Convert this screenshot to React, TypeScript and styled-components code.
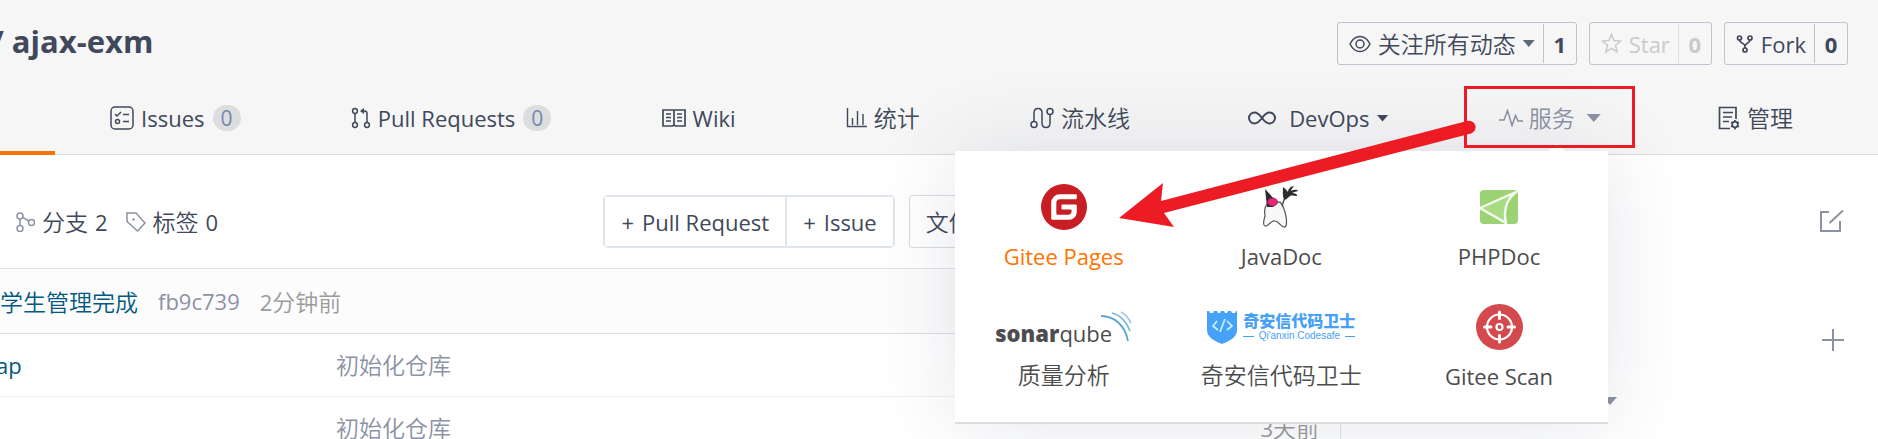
import React from 'react';
import styled, { createGlobalStyle } from 'styled-components';
import { SiGitee } from 'react-icons/si';

const ink = '#40485b';
const muted = '#8c92a4';
const link = '#005980';
const red = '#ed1c24';

const GlobalStyle = createGlobalStyle`
  *, *::before, *::after { box-sizing: border-box; }
  body {
    margin: 0;
    background: #fff;
    color: ${ink};
    font-family: 'Open Sans', 'Noto Sans CJK SC', sans-serif;
    font-size: 22px;
    line-height: 28px;
  }
  a { color: inherit; text-decoration: none; }
  button { font: inherit; color: inherit; cursor: pointer; }
`;

const Page = styled.div`
  height: 100vh;
  overflow: hidden;
`;

const Cjk = styled.span`
  padding-bottom: 2px;
  font-family: 'Noto Sans CJK SC', sans-serif;
  font-size: 23px;
  font-weight: 350;
`;

/* ---------- header ---------- */

const Header = styled.header`
  background: #f6f6f6;
  border-bottom: 1px solid #ddd;
`;

const TitleRow = styled.div`
  display: flex;
  align-items: flex-start;
  justify-content: space-between;
  padding: 22px 30px 19px 0;
`;

const Title = styled.h1`
  margin: 0 0 0 -9px;
  font-size: 31px;
  line-height: 38px;
  font-weight: 700;
`;

const Actions = styled.div`
  display: flex;
  gap: 12px;
`;

const CountButton = styled.div<{ $disabled?: boolean }>`
  display: flex;
  height: 43px;
  padding: 1px 0;
  border: 1px solid #bfc3d0;
  border-radius: 3px;
  color: ${(p) => (p.$disabled ? '#c9caca' : ink)};
`;

const CountMain = styled.button`
  display: flex;
  align-items: center;
  gap: 7px;
  padding: 0 8px 0 11px;
  border: 0;
  background: none;
  white-space: nowrap;
`;

const Count = styled.a<{ $disabled?: boolean }>`
  width: 33px;
  border-left: 1px solid ${(p) => (p.$disabled ? '#dfe0e5' : '#bfc3d0')};
  font-weight: 700;
  line-height: 41px;
  text-align: center;
`;

const Caret = styled.span<{ $w?: number; $color?: string }>`
  flex: none;
  width: ${(p) => p.$w ?? 12}px;
  height: ${(p) => ((p.$w ?? 12) > 12 ? 8 : 7)}px;
  background: ${(p) => p.$color ?? ink};
  clip-path: polygon(0 0, 100% 0, 50% 100%);
`;

const Nav = styled.nav`
  display: flex;
  height: 70px;
  padding-right: 30px;
`;

const ActiveTab = styled.span`
  flex: none;
  width: 55px;
  margin-bottom: -1px;
  border-bottom: 4px solid #fe7300;
`;

const NavItem = styled.div`
  position: relative;
  flex: 1 1 auto;
  display: flex;
  justify-content: center;
`;

const NavLink = styled.a<{ $muted?: boolean; $lead?: boolean; $gap?: number; $caretGap?: number }>`
  display: flex;
  align-items: center;
  gap: ${(p) => p.$gap ?? 7}px;
  padding: 0 0 2px ${(p) => (p.$lead ? 7 : 0)}px;
  color: ${(p) => (p.$muted ? muted : ink)};
  white-space: nowrap;

  ${Caret} { margin-left: ${(p) => (p.$caretGap ?? 0) - (p.$gap ?? 7)}px; }
`;

const Badge = styled.span`
  width: 28px;
  height: 26px;
  margin-left: 1px;
  border-radius: 13px;
  background: #dcddde;
  color: #7588b0;
  font-size: 21px;
  line-height: 26px;
  text-align: center;
`;

/* ---------- services menu ---------- */

const Menu = styled.div`
  position: absolute;
  z-index: 2;
  top: 67px;
  right: 48px;
  width: 653px;
  padding: 33px 0 24px;
  background: #fff;
  border-bottom: 2px solid #dcdddd;
  box-shadow: 0 0 80px rgba(40, 50, 90, 0.12);

  &::before {
    content: '';
    position: absolute;
    right: 43px;
    bottom: 100%;
    border: 8px solid transparent;
    border-top-width: 0;
    border-bottom-color: #fff;
  }
`;

const MenuGrid = styled.div`
  display: grid;
  grid-template-columns: repeat(3, 1fr);
  row-gap: 26px;
`;

const MenuItem = styled.a<{ $active?: boolean }>`
  display: flex;
  flex-direction: column;
  align-items: center;
  gap: 10px;
  height: 94px;
  color: ${(p) => (p.$active ? '#fe7300' : '#4c4c4c')};
  line-height: 32px;
  white-space: nowrap;

  ${Cjk} { line-height: 28px; }
`;

const LogoSlot = styled.span`
  display: flex;
  align-items: center;
  justify-content: center;
  height: 46px;
`;

const SonarMark = styled.span`
  display: flex;
  align-items: center;
  margin-top: 12px;
  color: #4d4d4f;
  font-size: 22px;
  line-height: 30px;
  font-weight: 400;

  b { font-weight: 800; }
  svg { margin: -12px 0 0 -12px; }
`;

const CodesafeMark = styled.span`
  display: flex;
  align-items: center;
  gap: 6px;
  color: #46a0f7;
`;

const CodesafeName = styled.span`
  display: flex;
  flex-direction: column;
  font: 900 16px/18px 'Noto Sans CJK SC', sans-serif;
`;

const CodesafeSub = styled.span`
  display: flex;
  align-items: center;
  gap: 5px;
  font: 400 10px/14px 'Liberation Sans', sans-serif;

  &::before, &::after {
    content: '';
    flex: 1;
    height: 1px;
    background: currentColor;
  }
`;

const Highlight = styled.span`
  position: absolute;
  z-index: 3;
  top: 2px;
  right: 21px;
  width: 171px;
  height: 62px;
  border: 3px solid ${red};
  pointer-events: none;
`;

const Arrow = styled.svg`
  position: absolute;
  z-index: 3;
  top: 34px;
  right: 179px;
  pointer-events: none;
`;

/* ---------- body ---------- */

const Body = styled.main`
  display: grid;
  grid-template-columns: minmax(0, 1fr) 537px;
`;

const Toolbar = styled.div`
  display: flex;
  height: 113px;
  padding-top: 40px;
`;

const Refs = styled.div`
  flex: 0 0 45%;
  display: flex;
  align-items: center;
  gap: 18px;
  height: 54px;
  padding-left: 16px;
`;

const RefLink = styled.a`
  display: flex;
  align-items: center;
  gap: 7px;
`;

const ButtonGroup = styled.div`
  display: flex;
  height: 53px;
  margin-right: 14px;
  border: 2px solid #dfe5eb;
  border-radius: 5px;
`;

const GroupButton = styled.button`
  padding: 0 16px;
  border: 0;
  background: #fff;
  white-space: nowrap;

  & + & { border-left: 2px solid #dfe5eb; }
  span { margin-right: 8px; }
`;

const FileButton = styled.button`
  display: flex;
  align-items: center;
  gap: 8px;
  height: 53px;
  padding: 0 16px;
  border: 1px solid #d6dce2;
  border-radius: 3px;
  background: #fff;
`;

const Files = styled.section`
  border-right: 1px solid #dfe5eb;
`;

const Commit = styled.div`
  display: flex;
  align-items: center;
  gap: 20px;
  height: 66px;
  border-top: 1px solid #e1e4e9;
  border-bottom: 1px solid #dcdfe1;
  background: #fcfcfc;
  color: ${muted};
`;

const CommitLink = styled.a`
  color: ${link};
`;

const FileLink = styled(CommitLink)`
  margin-left: -4px;
`;

const Time = styled.span`
  color: #9b9b9b;
`;

const FileTable = styled.table`
  width: 100%;
  border-collapse: collapse;
  table-layout: fixed;
  color: ${muted};
`;

const Cell = styled.td<{ $w?: string; $right?: boolean }>`
  width: ${(p) => p.$w ?? 'auto'};
  height: 62px;
  padding: 0 ${(p) => (p.$right ? 21 : 0)}px 0 0;
  border-bottom: 1px solid #eceef0;
  text-align: ${(p) => (p.$right ? 'right' : 'left')};
`;

const Sidebar = styled.aside`
  display: flex;
  flex-direction: column;
  padding: 54px 34px 0 262px;
`;

const IconButton = styled.button<{ $after: number }>`
  align-self: flex-end;
  display: flex;
  height: 24px;
  margin-bottom: ${(p) => p.$after}px;
  padding: 0;
  border: 0;
  background: none;
  color: ${muted};
`;

/* ---------- drawings ---------- */

const Svg = styled.svg`
  flex: none;
  fill: none;
`;

type IconProps = { w: number; h: number; sw?: number; color?: string; children: React.ReactNode };

const Icon = ({ w, h, sw = 1.5, color, children }: IconProps) => (
  <Svg
    width={w}
    height={h}
    viewBox={`0 0 ${w} ${h}`}
    stroke={color ?? 'currentColor'}
    strokeWidth={sw}
    aria-hidden="true"
  >
    {children}
  </Svg>
);

const EyeIcon = () => (
  <Icon w={22} h={18}>
    <path d="M1 9C3.500 4 7 1.500 11 1.500S18.500 4 21 9C18.500 14 15 16.500 11 16.500S3.500 14 1 9Z" />
    <circle cx="11" cy="9" r="4" />
  </Icon>
);
const StarIcon = () => (
  <Icon w={21} h={21}>
    <path d="M10.500 1.500 13 7.600l6.500.5-5 4.200 1.600 6.600-5.600-3.600-5.600 3.600 1.600-6.600-5-4.200 6.500-.5Z" />
  </Icon>
);
const ForkIcon = () => (
  <Icon w={18} h={18} sw={1.700}>
    <circle cx="3.500" cy="3" r="2" />
    <circle cx="14" cy="3" r="2" />
    <circle cx="9" cy="15" r="2" />
    <path d="M3.500 5c0 3.500 5.500 3 5.500 6v2M14 5c0 3.500-5 3-5 6" />
  </Icon>
);
const IssuesIcon = () => (
  <Icon w={24} h={24}>
    <rect x="1" y="1" width="22" height="22" rx="4" />
    <path d="m5 8 2 2 4-4M13 8.500h6M13 15.500h6" />
    <circle cx="7.500" cy="15.500" r="2" />
  </Icon>
);
const PullIcon = () => (
  <Icon w={20} h={22}>
    <circle cx="4" cy="4" r="2.400" />
    <circle cx="4" cy="18" r="2.400" />
    <circle cx="16" cy="18" r="2.400" />
    <path d="M4 6.500v9M16 15.500V6.500q0-2.500-2.500-2.500H10" />
    <path d="M13 1v6L9 4Z" fill="currentColor" stroke="none" />
  </Icon>
);
const WikiIcon = () => (
  <Icon w={24} h={18} sw={1.700}>
    <path d="M1 1h22v16H13.500l-1.500-1-1.500 1H1ZM12 1v15" />
    <path d="M4 5h5M4 8.500h5M4 12h5M15 5h5M15 8.500h5M15 12h5" />
  </Icon>
);
const StatsIcon = () => (
  <Icon w={21} h={20} sw={1.400}>
    <path d="M1.500 0v18.500H21M6.500 17V10M11.500 17V3M17 17V6" />
  </Icon>
);
const PipelineIcon = () => (
  <Icon w={24} h={22}>
    <circle cx="4" cy="17.500" r="3" />
    <circle cx="20" cy="4.500" r="3" />
    <path d="M4 14.500V6q0-4.500 4-4.500t4 4.500v10q0 4.500 4 4.500t4-4.500V7.500" />
  </Icon>
);
const DevopsIcon = () => (
  <Icon w={30} h={16} sw={2}>
    <path d="M15 8C12 4 10.500 2.500 7.500 2.500a5.500 5.500 0 0 0 0 11C10.500 13.500 12 12 15 8s4.500-5.500 7.500-5.500a5.500 5.500 0 0 1 0 11C19.500 13.500 18 12 15 8Z" />
  </Icon>
);
const PulseIcon = () => (
  <Icon w={24} h={18}>
    <path d="M0 11h5L8.500 1.500 13 16.500l3.500-10L19 12h5" />
  </Icon>
);
const ManageIcon = () => (
  <Icon w={22} h={24} sw={1.700}>
    <path d="M12 22.500H1.500v-21h16.500V13M5 6.500h10M5 11h9M5 15.500h6" />
    <circle cx="17" cy="18.500" r="2.800" />
    <path d="M17 14v2M17 21v2.500M13 16.300l1.500.8M19.500 19.900l1.500.8M13 20.700l1.500-.8M19.500 17.100l1.500-.8" />
  </Icon>
);
const BranchIcon = () => (
  <Icon w={19} h={20} color={muted}>
    <circle cx="4" cy="4" r="3" />
    <circle cx="4" cy="16.500" r="3" />
    <circle cx="15.500" cy="10.500" r="3" />
    <path d="M4 7v6.500M6.700 5.400l6 3.600" />
  </Icon>
);
const TagIcon = () => (
  <Icon w={20} h={20} color={muted}>
    <path d="M1 1h9l9 10-7.500 8L1 9.500Z" />
    <circle cx="7.500" cy="7.500" r="1.200" fill={muted} stroke="none" />
  </Icon>
);
const EditIcon = () => (
  <Icon w={25} h={24} sw={2}>
    <path d="M10 3H2v19h19V12M10.500 14 24 1.500" />
  </Icon>
);
const PlusIcon = () => (
  <Icon w={22} h={22} sw={2}>
    <path d="M11 0v22M0 11h22" />
  </Icon>
);
const DukeLogo = () => (
  <svg width="38" height="44" viewBox="0 0 38 44" aria-hidden="true">
    <path d="M5 19C1 24 3 27 3 31c-1 4-3 9 0 10 3 1 6-6 10-5 4 0 6 7 10 6 3-2 1-13-1-18-1-3-2-5-4-7Z" fill="#f8f8f8" stroke="#555" strokeWidth="1.200" />
    <path d="M3 4 15 17l-4 5H5Z" fill="#2b2d2e" />
    <ellipse cx="10.500" cy="17" rx="5" ry="4" fill="#f0207c" stroke="#7d2448" strokeWidth=".8" />
    <path d="m20 21 3-9" stroke="#555" strokeWidth="1.500" fill="none" />
    <path d="M21 2c3 2 4 4 5 5 0-3 3-6 6-6-1 2-3 3-3 5 2-1 6-2 7 0-2 1-5 1-6 2 2 0 6 1 5 3-3 0-5-1-7 0-2 2-4 3-5 4-3-3-2-8-2-13Z" fill="#2b2d2e" />
  </svg>
);
const PhpDocLogo = () => (
  <svg width="38" height="34" viewBox="0 0 38 34" aria-hidden="true">
    <rect width="38" height="34" rx="4" fill="#9bd273" />
    <path d="M0 18 36 2C26 10 23 20 26 33Z" fill="#a9db85" stroke="#f4fbef" strokeWidth="2.400" strokeLinejoin="round" />
  </svg>
);
const SonarWaves = () => (
  <svg width="32" height="32" viewBox="0 0 32 32" fill="none" strokeWidth="1.800" aria-hidden="true">
    <path d="M1 5C14 5 25 14 28 30" stroke="#5aa5cf" />
    <path d="M12 2c8 2 15 9 18 18" stroke="#7fb9d8" />
    <path d="M21 1c4 2 8 7 10 11" stroke="#9fcbe2" />
  </svg>
);
const Shield = () => (
  <svg width="30" height="34" viewBox="0 0 30 34" aria-hidden="true">
    <path d="M0 1h2l1 2h3l1-2h3l1 2h2l1-2h3l1 2h2l1-2h3l1 2h3l1-2h1v19c0 7-7 11-15 14C7 31 0 27 0 20Z" fill="#46a2f8" />
    <path d="m10 11-4 5 5 4M20 11l5 5-5 4M18 9l-5 13" fill="none" stroke="#c9f1ff" strokeWidth="1.700" />
  </svg>
);
const ScanLogo = () => (
  <svg width="47" height="46" viewBox="0 0 47 46" fill="none" stroke="#fff" aria-hidden="true">
    <ellipse cx="23.500" cy="23" rx="23.500" ry="23" fill="#d3494e" stroke="none" />
    <circle cx="23.500" cy="23" r="12.500" strokeWidth="2.200" />
    <circle cx="23.500" cy="23" r="3" strokeWidth="2.200" />
    <path d="M23.500 8v6.500M23.500 31.500V38M8.500 23H15M32 23h6.500" strokeWidth="3" strokeLinecap="round" />
  </svg>
);

export default function App() {
  return (
    <>
      <GlobalStyle />
      <Page>
        <Header>
          <TitleRow>
            <Title>/ ajax-exm</Title>
            <Actions>
              <CountButton>
                <CountMain>
                  <EyeIcon />
                  <Cjk>关注所有动态</Cjk>
                  <Caret $color="#60687a" />
                </CountMain>
                <Count href="#watchers">1</Count>
              </CountButton>
              <CountButton $disabled>
                <CountMain disabled>
                  <StarIcon />
                  Star
                </CountMain>
                <Count $disabled href="#stars">0</Count>
              </CountButton>
              <CountButton>
                <CountMain>
                  <ForkIcon />
                  Fork
                </CountMain>
                <Count href="#forks">0</Count>
              </CountButton>
            </Actions>
          </TitleRow>
          <Nav>
            <ActiveTab />
            <NavItem>
              <NavLink href="#issues"><IssuesIcon />Issues<Badge>0</Badge></NavLink>
            </NavItem>
            <NavItem>
              <NavLink href="#pulls"><PullIcon />Pull Requests<Badge>0</Badge></NavLink>
            </NavItem>
            <NavItem>
              <NavLink href="#wiki"><WikiIcon />Wiki</NavLink>
            </NavItem>
            <NavItem>
              <NavLink href="#stats"><StatsIcon /><Cjk>统计</Cjk></NavLink>
            </NavItem>
            <NavItem>
              <NavLink href="#pipelines"><PipelineIcon /><Cjk>流水线</Cjk></NavLink>
            </NavItem>
            <NavItem>
              <NavLink href="#devops" $lead $gap={12} $caretGap={7}><DevopsIcon />DevOps<Caret /></NavLink>
            </NavItem>
            <NavItem>
              <NavLink href="#services" $muted $gap={6} $caretGap={12}><PulseIcon /><Cjk>服务</Cjk><Caret $w={14} $color={muted} /></NavLink>
              <Menu>
                <MenuGrid>
                  <MenuItem href="#pages" $active>
                    <LogoSlot><SiGitee size={46} color="#c71d23" /></LogoSlot>
                    Gitee Pages
                  </MenuItem>
                  <MenuItem href="#javadoc">
                    <LogoSlot><DukeLogo /></LogoSlot>
                    JavaDoc
                  </MenuItem>
                  <MenuItem href="#phpdoc">
                    <LogoSlot><PhpDocLogo /></LogoSlot>
                    PHPDoc
                  </MenuItem>
                  <MenuItem href="#sonar">
                    <LogoSlot>
                      <SonarMark><b>sonar</b>qube<SonarWaves /></SonarMark>
                    </LogoSlot>
                    <Cjk>质量分析</Cjk>
                  </MenuItem>
                  <MenuItem href="#codesafe">
                    <LogoSlot>
                      <CodesafeMark>
                        <Shield />
                        <CodesafeName>
                          奇安信代码卫士
                          <CodesafeSub>Qi'anxin Codesafe</CodesafeSub>
                        </CodesafeName>
                      </CodesafeMark>
                    </LogoSlot>
                    <Cjk>奇安信代码卫士</Cjk>
                  </MenuItem>
                  <MenuItem href="#scan">
                    <LogoSlot><ScanLogo /></LogoSlot>
                    Gitee Scan
                  </MenuItem>
                </MenuGrid>
              </Menu>
              <Highlight />
              <Arrow width="358" height="110" viewBox="0 0 358 110" aria-hidden="true">
                <path d="M0 100 44 65 42 83 348 3a6.500 6.500 0 0 1 4 12.500L45 95l10 14Z" fill={red} />
              </Arrow>
            </NavItem>
            <NavItem>
              <NavLink href="#manage" $lead><ManageIcon /><Cjk>管理</Cjk></NavLink>
            </NavItem>
          </Nav>
        </Header>

        <Body>
          <div>
            <Toolbar>
              <Refs>
                <RefLink href="#branches"><BranchIcon /><Cjk>分支</Cjk>2</RefLink>
                <RefLink href="#tags"><TagIcon /><Cjk>标签</Cjk>0</RefLink>
              </Refs>
              <ButtonGroup>
                <GroupButton><span>+</span>Pull Request</GroupButton>
                <GroupButton><span>+</span>Issue</GroupButton>
              </ButtonGroup>
              <FileButton><Cjk>文件</Cjk><Caret /></FileButton>
            </Toolbar>
            <Files>
              <Commit>
                <CommitLink href="#commit"><Cjk>学生管理完成</Cjk></CommitLink>
                <a href="#hash">fb9c739</a>
                <Time>2<Cjk>分钟前</Cjk></Time>
              </Commit>
              <FileTable>
                <tbody>
                  <tr>
                    <Cell $w="336px"><FileLink href="#file">ap</FileLink></Cell>
                    <Cell><Cjk>初始化仓库</Cjk></Cell>
                    <Cell $w="120px" />
                  </tr>
                  <tr>
                    <Cell />
                    <Cell><Cjk>初始化仓库</Cjk></Cell>
                    <Cell $right><Time>3<Cjk>天前</Cjk></Time></Cell>
                  </tr>
                </tbody>
              </FileTable>
            </Files>
          </div>
          <Sidebar>
            <IconButton $after={96} aria-label="编辑"><EditIcon /></IconButton>
            <IconButton $after={44} aria-label="添加"><PlusIcon /></IconButton>
            <Caret $w={14} $color={muted} />
          </Sidebar>
        </Body>
      </Page>
    </>
  );
}
